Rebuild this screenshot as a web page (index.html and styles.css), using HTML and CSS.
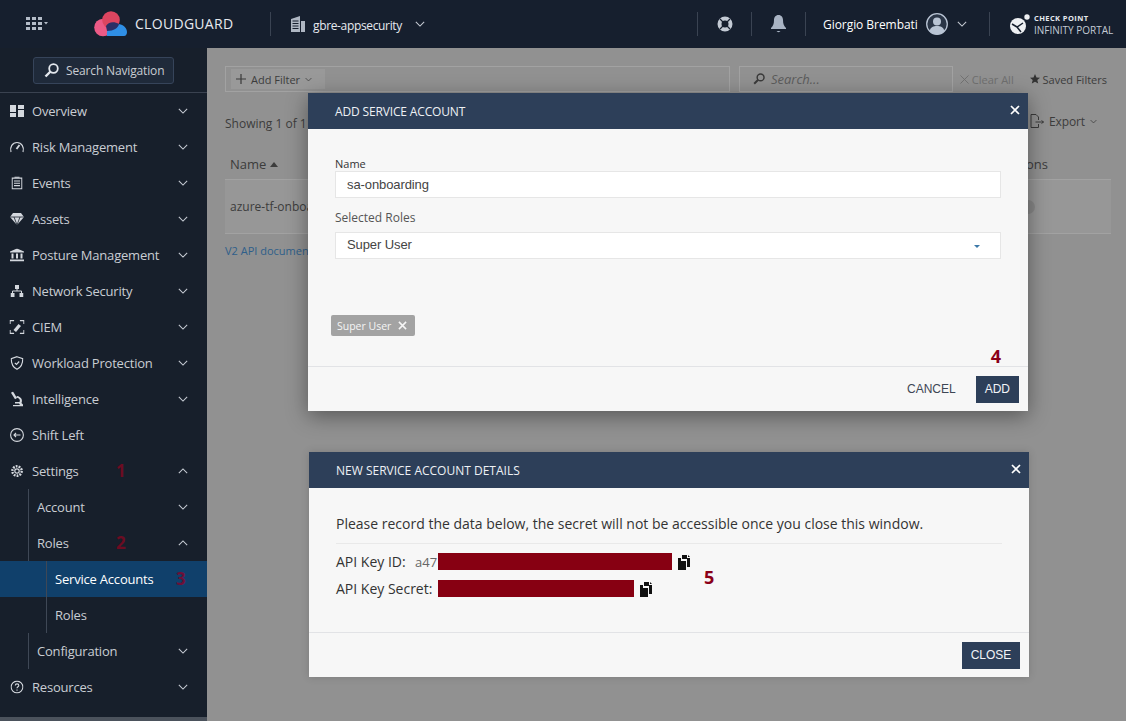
FILE: index.html
```html
<!DOCTYPE html>
<html lang="en">

<head>
    <meta charset="UTF-8">
    <title>CloudGuard - Service Accounts</title>
    <link rel="stylesheet" href="styles.css">
</head>

<body>
    <svg class="sprite" width="0" height="0">
        <symbol id="chev-down" viewBox="0 0 12 7"><path d="M1 1l5 5 5-5" fill="none" stroke="currentColor" stroke-width="1.3"/></symbol>
        <symbol id="chev-up" viewBox="0 0 12 7"><path d="M1 6l5-5 5 5" fill="none" stroke="currentColor" stroke-width="1.3"/></symbol>
        <symbol id="close" viewBox="0 0 10 10"><path d="M1 1l8 8M9 1l-8 8" fill="none" stroke="currentColor" stroke-width="1.700"/></symbol>
        <symbol id="copy" viewBox="0 0 14 15"><path d="M5 0h5v3h3v9H10V4H5z" fill="currentColor"/><path d="M1 3h3v3h5v9H1z" fill="currentColor"/><path d="M11 0l2 2h-2z" fill="currentColor"/></symbol>
    </svg>

    <header class="topbar">
        <div class="apps">
            <svg width="22" height="14" viewBox="0 0 22 14" fill="#b4bcc8">
                <path d="M0 0h4v3H0zM6 0h4v3H6zM12 0h4v3h-4zM0 5h4v3H0zM6 5h4v3H6zM12 5h4v3h-4zM0 10h4v3H0zM6 10h4v3H6zM12 10h4v3h-4z"/>
                <path d="M18 5h4l-2 2.500z"/>
            </svg>
        </div>
        <div class="brand">
            <svg width="33" height="26" viewBox="0 0 33 26">
                <circle cx="9" cy="16.500" r="8.800" fill="#ec5a86"/>
                <circle cx="17" cy="9" r="8.800" fill="#dd4560"/>
                <path d="M13 25c-1-7 4-14 11-12 5 0 9 4 9 8 0 2-1 4-3 4z" fill="#2f8fe6"/>
                <path d="M12 15c2-4 8-5 13-2-1 4-5 7-12 7z" fill="#2b2f66"/>
            </svg>
            <span>CLOUDGUARD</span>
        </div>
        <div class="tenant">
            <svg width="14" height="16" viewBox="0 0 14 16" fill="#aeb6c2"><path d="M0 3l9-3v16H0zM10 5h4v11h-4z"/><path d="M1.500 5h6M1.500 7.500h6M1.500 10h6M1.500 12.500h6" stroke="#161f2e"/></svg>
            <span>gbre-appsecurity</span>
            <svg class="chev" width="10" height="6"><use href="#chev-down"/></svg>
        </div>
        <div class="top-right">
            <div class="top-icon">
                <svg width="16" height="16" viewBox="0 0 16 16"><circle cx="8" cy="8" r="5.500" fill="none" stroke="#c3cad4" stroke-width="4"/><path d="M3 3l3 3M13 3l-3 3M3 13l3-3M13 13l-3-3" stroke="#161f2e" stroke-width="1.200"/></svg>
            </div>
            <div class="top-icon">
                <svg width="15" height="18" viewBox="0 0 15 18" fill="#a9b4c4"><path d="M7.500 0c3 0 4.500 2.500 4.500 5 0 4 1 6 3 8v1H0v-1c2-2 3-4 3-8 0-2.500 1.500-5 4.500-5z"/><path d="M5.500 16c1 1.500 3 1.500 4 0z"/></svg>
            </div>
            <div class="user">
                <span>Giorgio Brembati</span>
                <svg width="22" height="22" viewBox="0 0 22 22"><circle cx="11" cy="11" r="10.300" fill="#2a3546" stroke="#b9c4d4" stroke-width="1.300"/><circle cx="11" cy="8.500" r="4" fill="#b9c4d4"/><path d="M3.500 18c1-4 4-5 7.500-5s6.500 1 7.500 5c-4 4.500-11 4.500-15 0z" fill="#b9c4d4"/></svg>
                <svg class="chev" width="10" height="6"><use href="#chev-down"/></svg>
            </div>
            <div class="portal">
                <svg width="22" height="22" viewBox="0 0 22 22">
                    <circle cx="9" cy="13" r="8" fill="#eef0f3"/>
                    <circle cx="18" cy="4" r="2.700" fill="#eef0f3"/>
                    <path d="M3 11l5 3 6-4M8 14l4 5" stroke="#161f2e" stroke-width="1.500" fill="none"/>
                </svg>
                <div class="portal-text">
                    <strong>CHECK POINT</strong>
                    <span>INFINITY PORTAL</span>
                </div>
            </div>
        </div>
    </header>

    <div class="layout">
        <nav class="sidebar">
            <div class="nav-search">
                <button class="search-btn">
                    <svg width="15" height="15" viewBox="0 0 15 15"><circle cx="9.500" cy="5.500" r="4.300" fill="none" stroke="#e4e8ee" stroke-width="1.800"/><path d="M6.500 8.500L1.500 13.500" stroke="#e4e8ee" stroke-width="2.400"/></svg>
                    Search Navigation
                </button>
            </div>
            <ul class="nav">
                <li class="nav-item">
                    <svg class="nav-icon" width="14" height="12" viewBox="0 0 14 12" fill="#d4d8de"><path d="M0 0h6v7H0zM8 0h6v4H8zM0 8h6v4H0zM8 5h6v7H8z"/></svg>
                    <span>Overview</span>
                    <svg class="chev" width="10" height="6"><use href="#chev-down"/></svg>
                </li>
                <li class="nav-item">
                    <svg class="nav-icon" width="15" height="12" viewBox="0 0 15 12" fill="none" stroke="#d4d8de" stroke-width="1.200"><path d="M1.500 11C0 6 3 1.500 7.500 1.500S15 6 13.500 11"/><path d="M7 8l3-4" stroke-width="1.800"/></svg>
                    <span>Risk Management</span>
                    <svg class="chev" width="10" height="6"><use href="#chev-down"/></svg>
                </li>
                <li class="nav-item">
                    <svg class="nav-icon" width="11" height="13" viewBox="0 0 11 13" fill="none" stroke="#d4d8de" stroke-width="1.200"><path d="M.6 1.600h9.800v10.800H.6z"/><path d="M2.500 4.500h6M2.500 6.800h6M2.500 9.100h6M3 .6h5" stroke-width="1.100"/></svg>
                    <span>Events</span>
                    <svg class="chev" width="10" height="6"><use href="#chev-down"/></svg>
                </li>
                <li class="nav-item">
                    <svg class="nav-icon" width="14" height="12" viewBox="0 0 14 12" fill="#d4d8de"><path d="M3 0h8l3 4-7 8-7-8z"/><path d="M0 4h14M4 4l3 8 3-8" stroke="#171f2b" stroke-width=".8" fill="none"/></svg>
                    <span>Assets</span>
                    <svg class="chev" width="10" height="6"><use href="#chev-down"/></svg>
                </li>
                <li class="nav-item">
                    <svg class="nav-icon" width="14" height="13" viewBox="0 0 14 13" fill="#d4d8de"><path d="M7 0l7 3v1H0V3zM1.500 5h2v5h-2zM6 5h2v5H6zM10.500 5h2v5h-2zM0 11h14v2H0z"/></svg>
                    <span>Posture Management</span>
                    <svg class="chev" width="10" height="6"><use href="#chev-down"/></svg>
                </li>
                <li class="nav-item">
                    <svg class="nav-icon" width="13" height="12" viewBox="0 0 13 12" fill="#d4d8de"><path d="M4.500 0h4v4h-4zM0 8h4v4H0zM9 8h4v4H9z"/><path d="M6.500 4v2M2 8V6h9v2" stroke="#d4d8de" fill="none"/></svg>
                    <span>Network Security</span>
                    <svg class="chev" width="10" height="6"><use href="#chev-down"/></svg>
                </li>
                <li class="nav-item">
                    <svg class="nav-icon" width="15" height="14" viewBox="0 0 15 14" fill="none" stroke="#d4d8de" stroke-width="1.100"><path d="M.6 4V.6h4M10.400.6h4V4M.6 10v3.400h4M14.400 10v3.400h-4"/><path d="M4 10l5-6 2.500 2-5 6z" fill="#d4d8de" stroke="none"/></svg>
                    <span>CIEM</span>
                    <svg class="chev" width="10" height="6"><use href="#chev-down"/></svg>
                </li>
                <li class="nav-item">
                    <svg class="nav-icon" width="13" height="14" viewBox="0 0 13 14" fill="none" stroke="#d4d8de" stroke-width="1.200"><path d="M6.500.7l5.800 2c0 5-1.500 8.500-5.800 10.600C2.200 11.200.7 7.700.7 2.700z"/><path d="M4.300 6.800l1.700 1.700 2.700-3"/></svg>
                    <span>Workload Protection</span>
                    <svg class="chev" width="10" height="6"><use href="#chev-down"/></svg>
                </li>
                <li class="nav-item">
                    <svg class="nav-icon" width="12" height="15" viewBox="0 0 12 15" fill="#d4d8de"><path d="M2 0l4 6.500-2 1.200L0 1.200z"/><path d="M6 4.500c4 .5 6 4 4.500 7L12 13v2H2v-1.500h7L8 12H4v-1.500h4.500c1-2 0-4-3.500-4.500z"/></svg>
                    <span>Intelligence</span>
                    <svg class="chev" width="10" height="6"><use href="#chev-down"/></svg>
                </li>
                <li class="nav-item">
                    <svg class="nav-icon" width="14" height="14" viewBox="0 0 14 14" fill="none" stroke="#d4d8de" stroke-width="1.100"><circle cx="7" cy="7" r="6.400"/><path d="M10.500 7H4M6 5L4 7l2 2"/></svg>
                    <span>Shift Left</span>
                </li>
                <li class="nav-item">
                    <svg class="nav-icon" width="13" height="13" viewBox="0 0 13 13" fill="none" stroke="#d4d8de"><circle cx="6.500" cy="6.500" r="2.200" stroke-width="1.200"/><circle cx="6.500" cy="6.500" r="4.700" stroke-width="2.400" stroke-dasharray="1.800 1.100"/></svg>
                    <span>Settings</span>
                    <b class="mark mark-dim">1</b>
                    <svg class="chev" width="10" height="6"><use href="#chev-up"/></svg>
                </li>
                <li class="nav-item level-2">
                    <span>Account</span>
                    <svg class="chev" width="10" height="6"><use href="#chev-down"/></svg>
                </li>
                <li class="nav-item level-2">
                    <span>Roles</span>
                    <b class="mark mark-dim">2</b>
                    <svg class="chev" width="10" height="6"><use href="#chev-up"/></svg>
                </li>
                <li class="nav-item level-3 active">
                    <span>Service Accounts</span>
                    <b class="mark mark-three">3</b>
                </li>
                <li class="nav-item level-3">
                    <span>Roles</span>
                </li>
                <li class="nav-item level-2">
                    <span>Configuration</span>
                    <svg class="chev" width="10" height="6"><use href="#chev-down"/></svg>
                </li>
                <li class="nav-item">
                    <svg class="nav-icon" width="13" height="13" viewBox="0 0 13 13" fill="none" stroke="#d4d8de" stroke-width="1.100"><circle cx="6.500" cy="6.500" r="5.900"/><path d="M4.800 5c0-2.200 3.500-2.200 3.500 0 0 1.300-1.800 1.300-1.800 2.800M6.500 9v1.200"/></svg>
                    <span>Resources</span>
                    <svg class="chev" width="10" height="6"><use href="#chev-down"/></svg>
                </li>
            </ul>
            <div class="nav-foot"></div>
        </nav>

        <main class="content">
            <div class="filters">
                <div class="filter-bar">
                    <div class="add-filter">
                        <svg width="10" height="10" viewBox="0 0 10 10"><path d="M5 0v10M0 5h10" stroke="#3a3a3a" stroke-width="1.200"/></svg>
                        Add Filter
                        <svg class="chev" width="7" height="5"><use href="#chev-down"/></svg>
                    </div>
                </div>
                <div class="search-box">
                    <svg width="12" height="12" viewBox="0 0 15 15"><circle cx="9.500" cy="5.500" r="4.300" fill="none" stroke="#3a3a3a" stroke-width="1.800"/><path d="M6.500 8.500L1.500 13.500" stroke="#3a3a3a" stroke-width="2.400"/></svg>
                    <span>Search...</span>
                </div>
                <div class="clear-all">
                    <svg width="9" height="9" viewBox="0 0 10 10"><path d="M.5.500l9 9M9.500.500l-9 9" stroke="#6f6f6f"/></svg>
                    Clear All
                </div>
                <div class="saved">
                    <svg width="10" height="10" viewBox="0 0 10 10" fill="#333"><path d="M5 0l1.500 3.400 3.500.3-2.700 2.300.9 3.600L5 7.700 1.800 9.600l.9-3.600L0 3.700l3.500-.3z"/></svg>
                    Saved Filters
                </div>
            </div>
            <div class="summary">
                <span>Showing 1 of 1</span>
                <div class="export">
                    <svg width="14" height="14" viewBox="0 0 14 14" fill="none" stroke="#3a3a3a"><path d="M1 .5h5l2.500 2.500v3M8.500 10v3.500H1V.5M5.500 8h8M11.500 6.500L13.500 8l-2 1.500"/></svg>
                    Export
                    <svg class="chev" width="7" height="5"><use href="#chev-down"/></svg>
                </div>
            </div>
            <div class="table-head">
                <span>Name <i class="sort"></i></span>
                <span>Actions</span>
            </div>
            <div class="table-row">
                <span>azure-tf-onboarding</span>
                <i class="toggle"></i>
            </div>
            <a class="doc-link">V2 API documentation</a>

            <section class="modal modal-add">
                <div class="modal-head">
                    <h2>ADD SERVICE ACCOUNT</h2>
                    <svg class="modal-close" width="10" height="10"><use href="#close"/></svg>
                </div>
                <div class="modal-body">
                    <label class="field-label">Name</label>
                    <div class="input">sa-onboarding</div>
                    <label class="roles-label">Selected Roles</label>
                    <div class="input select">Super User<i class="caret"></i></div>
                    <div class="tag">Super User
                        <svg width="9" height="9"><use href="#close"/></svg>
                    </div>
                    <b class="mark mark-four">4</b>
                </div>
                <div class="modal-foot">
                    <button class="btn-text">CANCEL</button>
                    <button class="btn-primary">ADD</button>
                </div>
            </section>

            <section class="modal modal-details">
                <div class="modal-head">
                    <h2>NEW SERVICE ACCOUNT DETAILS</h2>
                    <svg class="modal-close" width="10" height="10"><use href="#close"/></svg>
                </div>
                <div class="modal-body">
                    <p class="notice">Please record the data below, the secret will not be accessible once you close this window.</p>
                    <div class="key-row">
                        <span class="key-name">API Key ID:</span>
                        <span class="key-value">a47</span>
                        <i class="redact redact-id"></i>
                        <svg class="copy" width="14" height="15"><use href="#copy"/></svg>
                    </div>
                    <div class="key-row">
                        <span class="key-name">API Key Secret:</span>
                        <i class="redact redact-secret"></i>
                        <svg class="copy" width="14" height="15"><use href="#copy"/></svg>
                    </div>
                    <b class="mark mark-five">5</b>
                </div>
                <div class="modal-foot">
                    <button class="btn-primary">CLOSE</button>
                </div>
            </section>
        </main>
    </div>
</body>

</html>
```

FILE: styles.css
```css
* {
    margin: 0;
    padding: 0;
    box-sizing: border-box;
}

body {
    width: 1126px;
    height: 721px;
    overflow: hidden;
    font-family: 'Open Sans', sans-serif;
    font-size: 13px;
    background-color: #919191;
}

.sprite {
    position: absolute;
}

button {
    font-family: inherit;
    border: none;
    cursor: pointer;
}

.chev {
    color: #c5cad2;
}

/* top bar */
.topbar {
    display: flex;
    align-items: center;
    height: 48px;
    background-color: #161f2e;
    color: #e6e9ee;
}

.apps {
    display: flex;
    width: 94px;
    padding-left: 26px;
    margin-top: -1px;
}

.brand {
    display: flex;
    align-items: center;
    gap: 8px;
    width: 177px;
    height: 24px;
    border-right: 1px solid #3a4352;
    margin-top: -1px;
    font-size: 14px;
    letter-spacing: .3px;
}

.tenant {
    display: flex;
    align-items: center;
    gap: 8px;
    padding-left: 20px;
    font-size: 12px;
    letter-spacing: -.35px;
}

.tenant span {
    margin-top: 2px;
}

.tenant .chev {
    margin-left: 5px;
}

.top-right {
    display: flex;
    align-items: center;
    margin-left: auto;
    height: 24px;
}

.top-icon {
    display: flex;
    align-items: center;
    justify-content: center;
    width: 54px;
    height: 24px;
    border-left: 1px solid #3a4352;
}

.user {
    display: flex;
    align-items: center;
    width: 185px;
    height: 24px;
    padding-left: 17px;
    border-left: 1px solid #3a4352;
    border-right: 1px solid #3a4352;
    color: #fff;
    font-size: 12px;
    letter-spacing: -.05px;
}

.user svg:first-of-type {
    margin-left: 8px;
}

.user .chev {
    margin-left: 9px;
}

.portal {
    display: flex;
    align-items: center;
    gap: 3px;
    width: 136px;
    padding-left: 19px;
}

.portal-text {
    display: flex;
    flex-direction: column;
    color: #c3cad4;
    font-size: 10px;
    line-height: 12px;
    white-space: nowrap;
}

.portal-text strong {
    font-size: 7.500px;
    letter-spacing: .4px;
    color: #e6e9ee;
}

/* sidebar */
.layout {
    display: flex;
    height: 673px;
}

.sidebar {
    display: flex;
    flex-direction: column;
    width: 207px;
    background-color: #171f2b;
    color: #c9cdd3;
    letter-spacing: -.2px;
}

.nav-search {
    display: flex;
    justify-content: center;
    padding: 9px 0 9px;
    height: 45px;
    border-bottom: 1px solid #3a4250;
}

.search-btn {
    display: flex;
    align-items: center;
    gap: 7px;
    width: 141px;
    height: 27px;
    padding-left: 10px;
    background-color: #1f2a3a;
    border: 1px solid #36445a;
    border-radius: 3px;
    color: #c9cdd3;
    font-size: 12px;
    letter-spacing: -.15px;
}

.nav {
    list-style: none;
    flex: 1;
}

.nav-item {
    position: relative;
    display: flex;
    align-items: center;
    height: 36px;
    padding: 0 19px 0 32px;
}

.nav-item .chev {
    margin-left: auto;
}

.nav-icon {
    position: absolute;
    left: 17px;
    top: 50%;
    transform: translate(-50%, -50%);
}

.level-2 {
    padding-left: 37px;
}

.level-3 {
    padding-left: 55px;
}

.level-2::before,
.level-3::before {
    content: "";
    position: absolute;
    top: 0;
    bottom: 0;
    left: 28px;
    width: 1px;
    background-color: #3f4856;
}

.level-3::before {
    left: 46px;
}

.active {
    background-color: #10406b;
    color: #fff;
}

.nav-foot {
    height: 4px;
    background-color: #4b525c;
}

.mark {
    position: absolute;
    font-size: 17px;
    line-height: 20px;
    color: #8a0018;
}

.mark-dim {
    left: 116px;
    top: 8px;
    color: #6c0c22;
}

.mark-three {
    left: 176px;
    top: 8px;
    color: #6c1038;
}

/* page under the dialogs */
.content {
    position: relative;
    flex: 1;
    padding: 18px 19px 0 18px;
    color: #3c3c3c;
    font-size: 12px;
}

.content .chev {
    color: #3c3c3c;
}

.filters {
    display: flex;
    align-items: center;
    height: 26px;
}

.filter-bar {
    width: 505px;
    height: 26px;
    padding: 2px 5px;
    border: 1px solid #a2a2a2;
}

.add-filter {
    display: flex;
    align-items: center;
    gap: 5px;
    width: 94px;
    height: 20px;
    padding-left: 5px;
    background-color: #999;
    font-size: 11px;
}

.search-box {
    display: flex;
    align-items: center;
    gap: 6px;
    width: 214px;
    height: 26px;
    margin-left: 9px;
    padding-left: 13px;
    border: 1px solid #a2a2a2;
    font-style: italic;
    font-size: 13px;
    color: #5c5c5c;
}

.clear-all {
    margin-left: 7px;
    color: #6f6f6f;
    font-size: 11px;
}

.saved {
    margin-left: 16px;
    font-size: 11px;
}

.summary {
    display: flex;
    justify-content: space-between;
    align-items: center;
    height: 20px;
    margin-top: 21px;
}

.export {
    display: flex;
    align-items: center;
    gap: 5px;
    margin-bottom: 4px;
    padding-right: 10px;
    letter-spacing: -.1px;
}

.table-head {
    display: flex;
    justify-content: space-between;
    align-items: center;
    height: 32px;
    margin-top: 15px;
    margin-right: -4px;
    padding: 0 63px 0 5px;
    border-bottom: 1px solid #a2a2a2;
    font-size: 13px;
}

.sort {
    display: inline-block;
    vertical-align: 2px;
    border: 4px solid transparent;
    border-top: 0;
    border-bottom: 5px solid #3c3c3c;
}

.table-row {
    display: flex;
    justify-content: space-between;
    align-items: center;
    height: 54px;
    margin-right: -4px;
    padding: 0 76px 0 5px;
    background-color: #979797;
    border-bottom: 1px solid #a2a2a2;
}

.toggle {
    width: 14px;
    height: 14px;
    border-radius: 50%;
    background-color: #888;
}

.doc-link {
    display: block;
    margin-top: 9px;
    font-size: 11px;
    color: #2f5f8a;
}

/* dialogs */
.modal {
    position: absolute;
    width: 720px;
    background-color: #f7f7f7;
    box-shadow: 0 5px 20px rgba(0, 0, 0, .4);
    color: #333;
}

.modal-add {
    left: 101px;
    top: 45px;
    height: 318px;
}

.modal-details {
    left: 102px;
    top: 404px;
    height: 225px;
    box-shadow: 0 0 8px rgba(0, 0, 0, .15);
}

.modal-head {
    display: flex;
    align-items: center;
    justify-content: space-between;
    height: 36px;
    padding: 0 8px 0 27px;
    background-color: #2d3f59;
    color: #eef1f5;
}

.modal-head h2 {
    font-size: 12px;
    font-weight: 400;
}

.modal-add h2 {
    letter-spacing: -.15px;
}

.modal-close {
    color: #fff;
    margin-top: -3px;
}

.modal-body {
    position: relative;
    height: 238px;
    padding: 28px 27px 0;
    border-bottom: 1px solid #e2e3e6;
}

.modal-details .modal-body {
    height: 145px;
    padding-top: 26px;
}

.modal-foot {
    display: flex;
    justify-content: flex-end;
    align-items: center;
    gap: 20px;
    height: 44px;
    padding-right: 9px;
}

.field-label {
    display: block;
    font-size: 11px;
    line-height: 14px;
}

.input {
    position: relative;
    display: flex;
    align-items: center;
    height: 27px;
    padding-left: 11px;
    background-color: #fff;
    border: 1px solid #e6e6e6;
    font-family: 'Liberation Sans', sans-serif;
    font-size: 13px;
    letter-spacing: -.1px;
    color: #444;
}

.select {
    padding-bottom: 2px;
}

.roles-label {
    display: block;
    margin-top: 11px;
    margin-bottom: 6px;
    font-size: 12px;
    line-height: 17px;
    color: #555;
}

.caret {
    position: absolute;
    right: 20px;
    top: 12px;
    border: 3px solid transparent;
    border-bottom: 0;
    border-top: 3px solid #3b78a8;
}

.tag {
    position: absolute;
    left: 23px;
    top: 186px;
    display: flex;
    align-items: center;
    gap: 7px;
    width: 84px;
    height: 21px;
    padding-left: 6px;
    background-color: #a3a3a3;
    border-radius: 2px;
    color: #f5f5f5;
    font-size: 10.500px;
}

.mark-four {
    right: 27px;
    top: 217px;
    font-size: 18px;
}

.btn-text {
    background: none;
    font-family: 'Liberation Sans', sans-serif;
    font-size: 12px;
    color: #3d4654;
}

.btn-primary {
    height: 27px;
    padding: 0 9px;
    background-color: #2d3f59;
    color: #f2f4f7;
    font-family: 'Liberation Sans', sans-serif;
    font-size: 12px;
}

.modal-details .btn-primary {
    width: 58px;
    padding: 0;
}

.notice {
    height: 30px;
    border-bottom: 1px solid #e9e9e9;
    font-size: 14px;
    line-height: 20px;
    color: #333;
}

.key-row {
    display: flex;
    align-items: center;
    height: 27px;
    font-size: 14px;
}

.key-row:first-of-type {
    margin-top: 4px;
}

.key-name {
    width: 102px;
    white-space: nowrap;
}

.key-row:first-of-type .key-name {
    width: 79px;
}

.key-value {
    width: 23px;
    font-size: 13px;
    color: #666;
}

.redact {
    height: 17px;
    background-color: #870012;
}

.redact-id {
    width: 234px;
}

.redact-secret {
    width: 196px;
}

.copy {
    margin-left: 5px;
    margin-top: 2px;
    color: #111;
}

.mark-five {
    left: 395px;
    top: 79px;
    font-size: 18px;
}
```
